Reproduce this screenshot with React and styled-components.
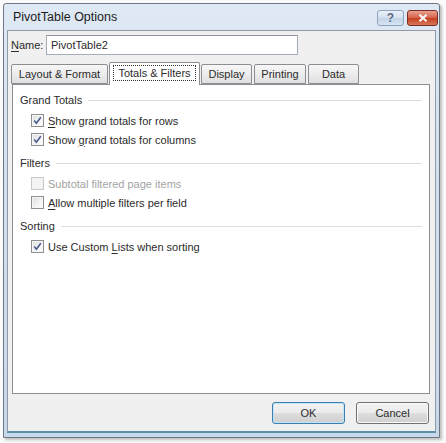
import React from 'react'
import styled, { createGlobalStyle } from 'styled-components'

const Global = createGlobalStyle`
    html, body {
        margin: 0;
        padding: 0;
        background: #fbfbfb;
    }
    * {
        box-sizing: border-box;
    }
`

const Page = styled.div`
    width: 446px;
    height: 443px;
    padding: 3px 6px 5px 3px;
    font-family: 'Liberation Sans', Arial, sans-serif;
`

const Window = styled.div`
    width: 100%;
    height: 100%;
    display: flex;
    flex-direction: column;
    border: 1px solid #6f7782;
    border-radius: 3px 3px 0 0;
    background: linear-gradient(180deg, #dfe9f5 0%, #d3e0ef 40%, #c8d8eb 100%);
    box-shadow: 2px 2px 3px rgba(0, 0, 0, 0.25);
    padding: 0 3px 4px 3px;
`

const TitleBar = styled.div`
    height: 26px;
    flex: none;
    display: flex;
    align-items: center;
    justify-content: space-between;
    padding-left: 6px;
`

const Title = styled.div`
    font-size: 12.5px;
    color: #1b1b1b;
`

const CaptionButtons = styled.div`
    display: flex;
    gap: 3px;
    align-self: flex-start;
    margin-top: 6px;
    margin-right: -2px;
`

const CaptionButton = styled.div`
    width: ${({ $wide }) => ($wide ? '31px' : '27px')};
    height: 16px;
    border: 1px solid ${({ $close }) => ($close ? '#7a2d22' : '#8ea3bd')};
    border-radius: 3px;
    display: flex;
    align-items: center;
    justify-content: center;
    background: ${({ $close }) =>
        $close
            ? 'linear-gradient(180deg, #e8a08f 0%, #d6644c 48%, #c4401f 52%, #d8765a 100%)'
            : 'linear-gradient(180deg, #eaf1f9 0%, #d6e2ef 48%, #c3d4e8 52%, #d7e4f2 100%)'};
    color: ${({ $close }) => ($close ? '#fff' : '#5a6b83')};
    font-size: 12px;
    font-weight: bold;
`

const Client = styled.div`
    flex: 1;
    display: flex;
    flex-direction: column;
    background: #f0f0f0;
    border: 1px solid #8f9aa6;
    border-bottom: 2px solid #5b8fa3;
    padding: 3px 6px 0 3px;
`

const NameRow = styled.div`
    display: flex;
    align-items: center;
    gap: 4px;
    height: 21px;
`

const Label = styled.span`
    font-size: 11px;
    color: #2b2b2b;
    width: 31px;
`

const U = styled.span`
    text-decoration: underline;
    text-underline-offset: 2px;
`

const TextInput = styled.div`
    width: 252px;
    height: 20px;
    border: 1px solid #a4acb6;
    border-top-color: #8d96a0;
    background: #fff;
    font-size: 11px;
    color: #2b2b2b;
    padding: 1px 4px;
    display: flex;
    align-items: center;
`

const TabStrip = styled.div`
    display: flex;
    align-items: flex-end;
    gap: 2px;
    margin-top: 7px;
    height: 22px;
    position: relative;
    z-index: 1;
`

const Tab = styled.div`
    width: ${({ $w }) => $w}px;
    height: ${({ $active }) => ($active ? '23px' : '20px')};
    margin-bottom: ${({ $active }) => ($active ? '-1px' : '0')};
    margin-left: ${({ $active }) => ($active ? '-1px' : '0')};
    margin-right: ${({ $active }) => ($active ? '-1px' : '0')};
    border: 1px solid #8c8e94;
    border-bottom: ${({ $active }) => ($active ? 'none' : '1px solid #8c8e94')};
    border-radius: 2px 2px 0 0;
    background: ${({ $active }) =>
        $active ? '#fff' : 'linear-gradient(180deg, #f7f7f7 0%, #ececec 50%, #dfdfdf 100%)'};
    display: flex;
    align-items: center;
    justify-content: center;
    font-size: 11px;
    color: #2b2b2b;
    padding-bottom: ${({ $active }) => ($active ? '2px' : '0')};
`

const FocusText = styled.span`
    outline: 1px dotted #333;
    outline-offset: 1px;
    padding: 0 3px;
`

const Panel = styled.div`
    margin-left: 1px;
    width: 418px;
    height: 310px;
    background: #fff;
    border: 1px solid #8c8e94;
    padding: 6px 7px 0 7px;
    display: flex;
    flex-direction: column;
`

const Group = styled.div`
    display: flex;
    flex-direction: column;
    margin-bottom: 5px;
`

const GroupHeader = styled.div`
    height: 18px;
    display: flex;
    align-items: center;
    gap: 6px;
    font-size: 11px;
    color: #2b2b2b;

    &::after {
        content: '';
        flex: 1;
        height: 1px;
        background: #dadde2;
    }
`

const Options = styled.div`
    display: flex;
    flex-direction: column;
    padding-left: 11px;
    margin-top: 2px;
`

const OptionRow = styled.div`
    height: 19px;
    display: flex;
    align-items: center;
    gap: 4px;
    font-size: 11px;
    color: ${({ $disabled }) => ($disabled ? '#a3a3a3' : '#2b2b2b')};
`

const Box = styled.div`
    width: 13px;
    height: 13px;
    flex: none;
    border: 1px solid ${({ $disabled }) => ($disabled ? '#c9c9c9' : '#8e8f8f')};
    background: ${({ $disabled }) =>
        $disabled
            ? '#f4f4f4'
            : 'linear-gradient(135deg, #dcdcdc 0%, #f4f4f4 60%, #ffffff 100%)'};
    display: flex;
    align-items: center;
    justify-content: center;
    box-shadow: inset 0 0 0 1px ${({ $disabled }) => ($disabled ? '#f0f0f0' : '#f6f6f6')};
`

const ButtonRow = styled.div`
    display: flex;
    justify-content: flex-end;
    gap: 11px;
    margin-top: 8px;
`

const Button = styled.div`
    width: 73px;
    height: 22px;
    border: 1px solid ${({ $default }) => ($default ? '#3c7fb1' : '#707070')};
    border-radius: 3px;
    background: linear-gradient(180deg, #f2f2f2 0%, #ebebeb 48%, #dddddd 52%, #cfcfcf 100%);
    box-shadow: inset 0 0 0 1px ${({ $default }) => ($default ? '#bfe6f7' : '#fafafa')};
    display: flex;
    align-items: center;
    justify-content: center;
    font-size: 11px;
    color: #2b2b2b;
`

const Check = () => (
    <svg width="9" height="9" viewBox="0 0 9 9">
        <path d="M1.2 4.6 L3.4 7.2 L7.8 1.2" fill="none" stroke="#4a5c8f" strokeWidth="1.6" />
    </svg>
)

const Checkbox = ({ checked, disabled, children }) => (
    <OptionRow $disabled={disabled}>
        <Box $disabled={disabled}>{checked && <Check />}</Box>
        <span>{children}</span>
    </OptionRow>
)

const tabs = [
    { label: 'Layout & Format', w: 97 },
    { label: 'Totals & Filters', w: 91, active: true },
    { label: 'Display', w: 51 },
    { label: 'Printing', w: 52 },
    { label: 'Data', w: 51 },
]

const App = () => {
    return (
        <Page>
            <Global />
            <Window>
                <TitleBar>
                    <Title>PivotTable Options</Title>
                    <CaptionButtons>
                        <CaptionButton>?</CaptionButton>
                        <CaptionButton $close $wide>
                            <svg width="10" height="8" viewBox="0 0 10 8">
                                <path d="M1.5 0.8 L8.5 7.2 M8.5 0.8 L1.5 7.2" stroke="#fff" strokeWidth="2" />
                            </svg>
                        </CaptionButton>
                    </CaptionButtons>
                </TitleBar>
                <Client>
                    <NameRow>
                        <Label>
                            <U>N</U>ame:
                        </Label>
                        <TextInput>PivotTable2</TextInput>
                    </NameRow>
                    <TabStrip>
                        {tabs.map((t) => (
                            <Tab key={t.label} $w={t.w} $active={t.active}>
                                {t.active ? <FocusText>{t.label}</FocusText> : t.label}
                            </Tab>
                        ))}
                    </TabStrip>
                    <Panel>
                        <Group>
                            <GroupHeader>Grand Totals</GroupHeader>
                            <Options>
                                <Checkbox checked>
                                    <U>S</U>how grand totals for rows
                                </Checkbox>
                                <Checkbox checked>
                                    Show <U>g</U>rand totals for columns
                                </Checkbox>
                            </Options>
                        </Group>
                        <Group>
                            <GroupHeader>Filters</GroupHeader>
                            <Options>
                                <Checkbox disabled>Subtotal filtered page items</Checkbox>
                                <Checkbox>
                                    <U>A</U>llow multiple filters per field
                                </Checkbox>
                            </Options>
                        </Group>
                        <Group>
                            <GroupHeader>Sorting</GroupHeader>
                            <Options>
                                <Checkbox checked>
                                    Use Custom <U>L</U>ists when sorting
                                </Checkbox>
                            </Options>
                        </Group>
                    </Panel>
                    <ButtonRow>
                        <Button $default>OK</Button>
                        <Button>Cancel</Button>
                    </ButtonRow>
                </Client>
            </Window>
        </Page>
    )
}

export default App
